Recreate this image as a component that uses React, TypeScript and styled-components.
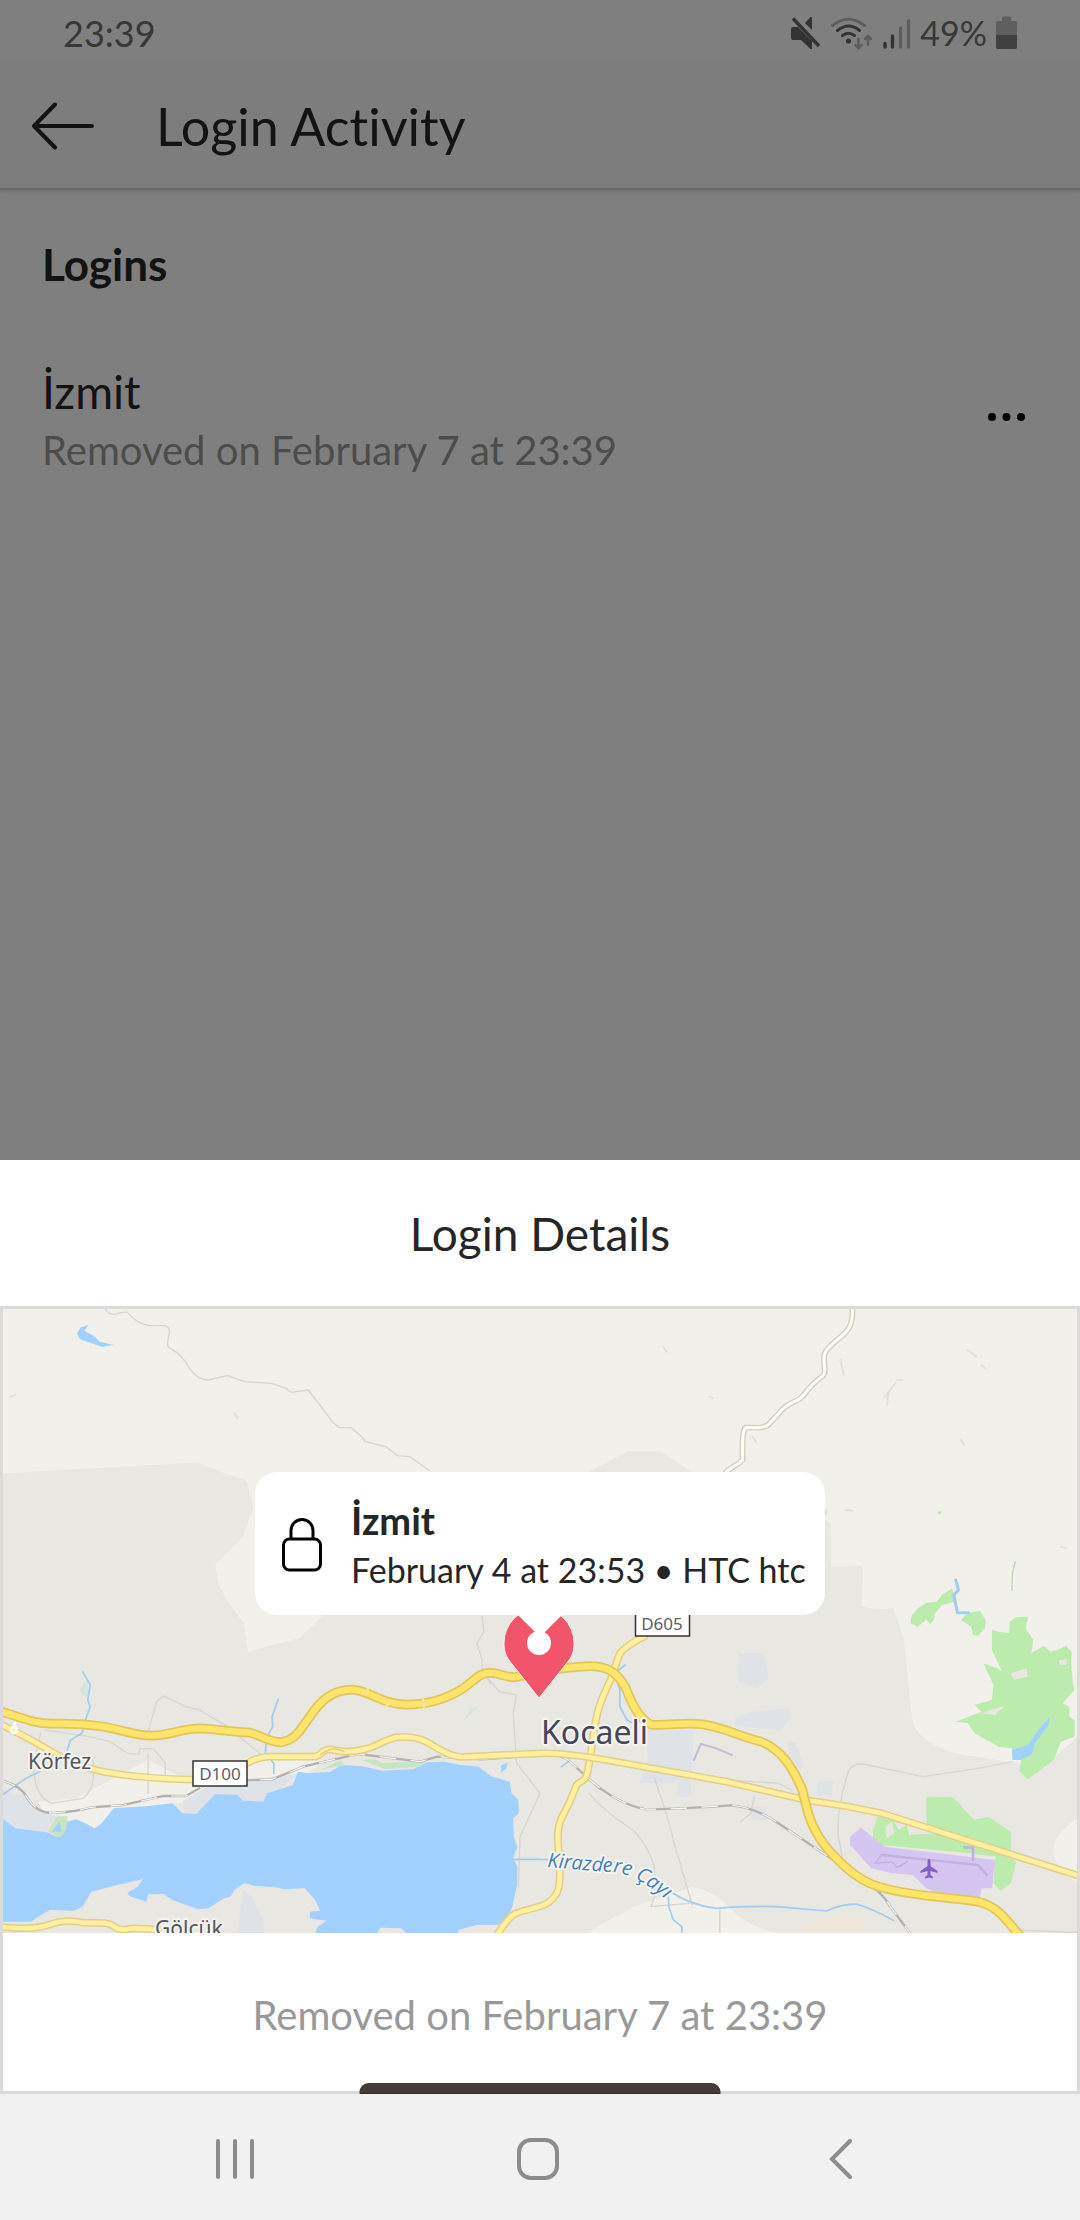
import React from "react";
import styled, { createGlobalStyle } from "styled-components";

const GlobalStyle = createGlobalStyle`
  * { box-sizing: border-box; }
  body { margin: 0; background: #fff; }
  button { border: 0; padding: 0; background: none; font: inherit; color: inherit; display: flex; align-items: center; justify-content: center; }
  svg { display: block; flex: none; }
  h1, h2, h3, p, ul { margin: 0; padding: 0; font-weight: 400; }
`;

const Screen = styled.div`
  min-height: 100vh;
  display: flex;
  flex-direction: column;
  font-family: Lato, "Open Sans", sans-serif;
  font-variant-ligatures: none;
  color: #262626;
`;

const Page = styled.div`
  position: relative;
  flex: 1;
  display: flex;
  flex-direction: column;
  background: #fff;
`;

const Scrim = styled.div`
  position: absolute;
  inset: 0;
  background: rgba(0, 0, 0, 0.5);
`;

const StatusBar = styled.div`
  height: 63px;
  padding: 2px 63px 0;
  display: flex;
  align-items: center;
  justify-content: space-between;
  font-size: 36px;
  line-height: 44px;
  color: #707070;
`;

const StatusIcons = styled.div`
  display: flex;
  align-items: center;
  gap: 9px;
  font-size: 34px;
`;

const Header = styled.header`
  height: 127px;
  padding: 0 32px;
  display: flex;
  align-items: center;
  gap: 62px;
  background: #fafafa;
  border-bottom: 2px solid #d4d4d4;
  box-shadow: 0 2px 3px rgba(0, 0, 0, 0.12);
`;

const PageTitle = styled.h1`
  font-size: 52px;
  line-height: 64px;
`;

const Section = styled.section`
  padding: 44px 42px 0;
`;

const SectionTitle = styled.h2`
  font-size: 44px;
  line-height: 60px;
  font-weight: 700;
`;

const LoginRow = styled.div`
  margin-top: 69px;
  display: flex;
  align-items: center;
  justify-content: space-between;
`;

const MoreButton = styled.button`
  && { padding: 0 12px 8px; }
`;

const Place = styled.p`
  font-size: 46px;
  line-height: 58px;
`;

const Removed = styled.p`
  font-size: 40px;
  line-height: 58px;
  color: #999;
`;

const Sheet = styled.section`
  display: flex;
  flex-direction: column;
  background: #fff;
`;

const SheetTitle = styled.h2`
  padding: 44px 0 42px;
  font-size: 46px;
  line-height: 60px;
  text-align: center;
`;

const Details = styled.div`
  position: relative;
  border: 3px solid #dbdbdb;
`;

const MapBox = styled.div`
  position: relative;
  aspect-ratio: 1074 / 624;
  & > svg { width: 100%; height: 100%; }
`;

const Callout = styled.div`
  position: absolute;
  left: 50%;
  bottom: 51%;
  transform: translateX(-50%);
  width: 570px;
  height: 143px;
  padding: 4px 16px 0 27px;
  display: flex;
  align-items: center;
  gap: 29px;
  border-radius: 22px;
  background: #fff;
  white-space: nowrap;

  &::after {
    content: "";
    position: absolute;
    top: 100%;
    left: 50%;
    margin-left: -22px;
    border: 22px solid transparent;
    border-bottom-width: 0;
    border-top-color: #fff;
  }
`;

const CalloutTitle = styled.h3`
  font-size: 38px;
  line-height: 50px;
  font-weight: 700;
`;

const CalloutText = styled.p`
  font-size: 34px;
  line-height: 50px;
`;

const Notice = styled.div`
  padding: 53px 0 47px;
  text-align: center;
`;

const Toast = styled.div`
  position: absolute;
  left: 50%;
  bottom: -3px;
  transform: translateX(-50%);
  width: 361px;
  height: 11px;
  border-radius: 9px 9px 0 0;
  background: #433c39;
  border-bottom: 1px solid #332d2b;
`;

const NavBar = styled.nav`
  height: 126px;
  padding: 3px 88px 0 84px;
  display: grid;
  grid-template-columns: repeat(3, 1fr);
  background: #f1f1f1;
`;

const MuteIcon = () => (
  <svg width="30" height="34" viewBox="0 0 30 34" fill="#666">
    <path d="M2 11h5l14 14v8h-1.500L10 24H2Q0 24 0 22V13Q0 11 2 11zM14 7l5.500-6H21v13z" />
    <path d="M2 2.500L28 30" stroke="#666" strokeWidth="3.400" />
  </svg>
);

const WifiIcon = () => (
  <svg width="44" height="34" viewBox="0 0 44 34" fill="none" strokeWidth="3" strokeLinecap="round">
    <path d="M2.500 9.500Q18.500-3 34.500 9.500" stroke="#bbb" />
    <path d="M7.500 14.500Q18.500 5.500 29.500 14.500M12.500 19.500Q18.500 15 24.500 19.500" stroke="#666" />
    <circle cx="18.500" cy="25" r="2.600" fill="#666" />
    <path d="M28.500 23v8M25.500 29l3 3 3-3M38 29v-8M35 23l3-3 3 3" stroke="#bbb" strokeWidth="2.600" />
  </svg>
);

const SignalIcon = () => (
  <svg width="28" height="34" viewBox="0 0 28 34" strokeWidth="3.400" strokeLinecap="round">
    <path d="M2 27.500v3.500M9.500 20v11" stroke="#666" />
    <path d="M17.500 12v19M25.500 5v26" stroke="#bbb" />
  </svg>
);

const BatteryIcon = () => (
  <svg width="21" height="34" viewBox="0 0 21 34">
    <path d="M6 5V2q0-1.500 1.500-1.500h6Q15 .5 15 2v3h4q2 0 2 2v12H0V7q0-2 2-2z" fill="#bfbfbf" />
    <path d="M0 19h21v12q0 2-2 2H2q-2 0-2-2z" fill="#808080" />
  </svg>
);

const ArrowIcon = () => (
  <svg width="62" height="48" viewBox="0 0 62 48" fill="none" stroke="#262626" strokeWidth="4" strokeLinecap="round" strokeLinejoin="round">
    <path d="M60 24H2M23 2.500L2 24l21 21.500" />
  </svg>
);

const DotsIcon = () => (
  <svg width="38" height="40" viewBox="0 0 38 40" fill="#000">
    <circle cx="4" cy="20" r="4" />
    <circle cx="18.500" cy="20" r="4" />
    <circle cx="33" cy="20" r="4" />
  </svg>
);

const LockIcon = () => (
  <svg width="40" height="54" viewBox="0 0 40 54" fill="none" stroke="#000" strokeWidth="3">
    <rect x="1.500" y="21" width="37" height="31" rx="6" />
    <path d="M9 21V12.500a11 11 0 0 1 22 0V21" />
  </svg>
);

const motorway =
  "M0 334C60 350 90 370 150 371C200 370 250 372 300 380C360 390 390 407 440 407C500 405 530 385 580 385C640 388 680 397 720 397C760 405 775 425 815 427C860 420 870 390 900 350C930 300 970 268 1025 269C1080 275 1110 313 1180 314C1250 314 1300 295 1345 265C1380 240 1390 220 1420 218C1460 220 1470 235 1500 231C1560 215 1620 203 1700 199C1760 195 1790 215 1815 260C1835 310 1850 350 1890 374C1950 378 1980 365 2040 373C2110 385 2150 410 2210 425C2270 450 2300 500 2330 570C2345 640 2355 690 2410 755C2450 800 2500 850 2570 865C2660 890 2750 890 2840 905C2900 920 2920 960 2960 1005";
const road =
  "M0 372Q70 408 125 440Q220 500 300 515Q400 535 560 539L700 500Q740 472 780 470H915C940 465 930 447 960 449L1000 455C1080 455 1100 425 1150 412C1210 405 1240 425 1270 445Q1310 470 1340 471Q1450 465 1570 460C1640 458 1700 470 1760 480L2110 545L2340 600Q2450 615 2560 640Q2820 725 3140 830";
const localRoad =
  "M1870 110Q1820 135 1800 160Q1785 200 1775 235C1740 310 1735 330 1725 390Q1712 490 1705 520C1700 550 1680 540 1672 560Q1655 610 1630 655C1615 690 1620 730 1625 790C1628 860 1625 890 1580 915C1520 935 1490 935 1475 960Q1455 985 1435 1015";
const southRoad = "M0 980C60 988 110 985 140 975C180 960 210 960 240 968C290 970 310 965 330 978Q345 995 385 985Q430 985 460 990";
const northRoad =
  "M2475-880C2477-830 2470-810 2430-780C2395-745 2388-750 2395-690C2395-665 2375-670 2345-630C2320-590 2300-600 2275-575L2230-525C2205-510 2190-520 2165-517C2155-505 2156-480 2156-420C2140-400 2125-405 2100-375";
const railway =
  "M0 540Q60 555 80 595Q110 645 165 638Q220 635 265 622L360 615L475 588H540Q580 565 610 545L790 538L880 500L1040 462L1220 485L1270 470L1400 478L1570 465Q1620 460 1650 480L1710 537Q1790 610 1870 627Q1930 630 2120 616Q2190 620 2260 670L2470 815Q2560 870 2585 920L2650 1010";

const MapDrawing = () => (
  <svg viewBox="3 1309 1074 624" preserveAspectRatio="none" role="img" aria-label="Kocaeli">
    <defs>
      <path id="river-label" d="M547 1867L606 1872Q636 1870 676 1909" />
    </defs>
    <rect x="3" y="1309" width="1074" height="624" fill="#f1f0ea" />
    <g transform="translate(0 1600) scale(0.3444 0.3333)" fill="none" strokeLinecap="round" strokeLinejoin="round">
      <path
        fill="#e8e7e2"
        d="M0-379L450-406L575-412L640-385L717-357L735-275L705-190L625-105L635-45L665 10L708 70L720 155L868 115L940 45L1100-150L1500-250L1715-387L1823-447H1913L2008-387L2200-300L2396-240L2411-230L2413-100L2505-102L2503 20Q2550 30 2593 25L2623 110L2648 350Q2655 400 2700 425Q2740 455 2800 465L2960 490L2990 535L3140 400V650Q3060 690 3058 760Q3075 830 3140 850V1000H2260Q2170 980 2120 925Q2080 875 2010 860Q1940 885 1840 920L1700 1000H0z"
      />
      <path fill="#f1f0ea" d="M110 605L220 595L430 480L560 550L720 470L950 480L860 540L640 580L540 605L340 630L275 690L200 660L130 640z" />
      <path
        fill="#dfe2e6"
        d="M0 570L75 590L125 640L185 650L190 700L160 712L50 690L0 660zM530 605L600 560L690 545L830 525L870 520L770 605H700L630 590L570 642H535zM690 1000L705 870L730 890L765 960V1000zM2145 160H2218L2230 220L2228 240L2200 265L2143 245zM2135 350L2190 335L2290 325L2295 350L2270 390L2200 385L2135 375zM1880 390H2015L2005 590H1968V540L1940 550H1855L1880 480zM2285 425L2310 430L2335 500L2325 510L2300 480zM2375 545L2420 543L2415 590L2370 585zM2185 620H2225V660H2180z"
      />
      <path fill="#efe5d6" opacity=".7" d="M2400 955L2500 945L2510 998H2320L2330 970z" />
      <path
        fill="#a3d1ff"
        d="M0 650L45 685L135 697L165 710L185 700L195 665L220 658L245 668L275 685L295 670L330 625L430 618L500 610L530 640L570 642L625 582L690 585L705 602L765 605L775 580L850 555L865 515L895 520L960 515L990 495L1050 498L1110 512L1200 507L1240 487L1290 485L1340 495L1390 500L1425 528L1480 545L1485 580L1505 600L1507 640L1490 655L1492 710L1502 740L1490 775L1502 800V850L1488 920L1470 960L1445 975L1385 975L1330 990V1000H1180L1165 985L1105 983L1095 1000H915L922 980L948 962L900 955V935L930 932L915 900L885 865L825 868L800 862L740 858L710 850L680 870L670 890L650 895L605 925L575 928L500 900L475 882L430 883L425 905L375 888L370 878L400 860L415 838L340 855L265 875L240 920L215 932L145 930L120 945L90 965L0 965z"
      />
      <path fill="#c7e5c3" d="M165 650L195 648L192 690L175 712L140 695zM1050 480L1090 478L1110 490L1190 485L1240 480L1220 500L1120 508zM930 510L990 480L1000 495z" />
      <path fill="#d5e5dc" d="M230 270L255 240V290L240 285zM1345 365L1365 325L1390 318L1360 350z" />
      <path fill="#a3d1ff" d="M257-825L235-818L223-800L232-782L262-772L295-760L330-765L290-775L272-793L245-808zM150 695L172 665L180 695zM1455 495L1475 488L1470 505L1455 518z" />

      <g fill="#bcebae">
        <path d="M2643 70L2648 45L2665 25L2690 8L2720 5L2735-15L2765-35L2775 5L2735 15L2715 40L2712 60L2700 72L2690 58L2665 80zM2810 40L2845 32L2862 60L2860 85L2840 107L2825 105L2820 80L2790 60z" />
        <path d="M2880 90L2900 95L2930 100L2932 65L2950 52L2985 50L2978 85L3000 120L2995 160L3030 137L3050 155L3070 150L3095 137L3112 155L3110 180L3115 250L3120 270L3085 310L3105 320L3105 350L3120 360V410L3080 425L3060 480L2985 538L2960 515L2965 480L2935 445L2900 440L2830 400L2810 370L2775 365L2850 335L2830 315L2880 300L2885 255L2855 190L2895 205L2910 215L2880 150z" />
        <path d="M2690 590L2765 592L2785 608L2800 630L2830 660L2870 650L2935 695V760L2950 790L2935 850L2905 872L2885 850L2890 770L2820 760L2560 735L2535 720V690L2548 650L2590 655L2610 690L2640 670L2690 680z" />
        <path d="M2395-270h5v15h-5zM2720-265l15-2-5 12z" />
      </g>
      <path fill="#e8e7e2" d="M2570 680L2590 665L2597 700L2575 715zM2935 220L2980 205L2985 230L2945 240zM3073 180L3100 178L3095 195L3078 195zM2630 660L2670 675L2720 700L2640 705zM2850 340L2915 318L2890 345z" />
      <path fill="#a3d1ff" d="M2938 450L2985 435L3015 390L3048 350L3045 375L3005 430L2995 465L2965 480H2940z" />
      <path stroke="#a3cdf5" strokeWidth="9" d="M2775-60L2783-30L2770-15L2780 38H2812" />
      <path stroke="#b5dfa8" strokeWidth="4" d="M2948-115L2940-80L2938-30" />
      <path fill="#d5c6f1" d="M2468 710L2500 683L2570 740L2890 780L2880 865H2850L2845 893L2730 885L2690 865L2650 825L2590 820L2530 805L2468 735z" />
      <path stroke="#c2b1e0" strokeWidth="8" d="M2560 765L2840 795L2865 825M2800 742H2825V780" />
      <path stroke="#c2b1e0" strokeWidth="4" d="M2560 765L2540 790L2590 785L2605 803L2635 785" />
      <path stroke="#c5bfd5" strokeWidth="6" d="M2015 480L2035 432L2080 445L2125 465" />

      <g stroke="#d7d6cf" strokeWidth="4">
        <path d="M305-873C325-840 350-870 370-863C400-830 410-830 430-824L480-823C510-810 470-765 495-755Q530-735 550-695Q575-660 605-660L660-673L710-655L790-650L830-635L845-623L895-630L925-590L965-535L985-517H1020L1050-490L1060-475L1120-460L1155-433L1190-430L1245-390" />
        <path d="M430 395L455 305L475 288L540 320L580 330L660 380L760 465M130 390L260 410L320 425L370 460L405 463V447L445 445L480 490V540M118 400L97 500Q100 590 150 610L240 595Q280 570 270 480M430 460V580M1400 50L1405 95L1385 130L1400 180V215L1450 275L1500 285L1490 340L1500 490L1568 580L1510 710L1505 860M1400 215L1425 250" />
        <path d="M1710 580Q1750 630 1830 685Q1875 720 1900 800V890L1890 920L2000 910M1900 535Q1940 650 1960 740L2010 915M2940 485L2840 505L2680 530L2520 495Q2480 485 2465 510Q2430 620 2433 700L2445 770M2110 540L2260 550L2300 570M2190 590L2180 640L2150 665M2090 930V1000M2950 990L3140 998" />
      </g>
      <path
        stroke="#e3e1da"
        strokeWidth="6"
        d="M1925-760L1935-745M2440-720L2450-675M2570-610L2600-650M2580-620L2575-585M2605-660L2620-660M2810-750L2835-730M2850-705L2860-695M2790-480L2800-465M2060-610L2070-605M680-560L690-545M30-610L45-615M2185-490L2195-475M2455-270L2475-268M3080-160L3095-155"
      />

      <g stroke="#a3cdf0" strokeWidth="5">
        <path d="M240 215L262 255L255 300L262 320L248 360L238 400L205 420L195 450M115 515L75 535L0 590M808 297L790 350L792 380L775 410L770 460L795 490V520M1815 195L1785 220L1800 270L1800 320L1820 360L1850 375M1570 778H1490M1650 485L1630 500M1568 778Q1680 780 1830 790" />
        <path d="M1940 870Q2000 915 2080 925Q2200 915 2280 922L2400 933Q2450 910 2490 913Q2540 930 2595 962M1940 870L1942 920L1955 960L1980 980V1000M1710 535L1745 570" />
      </g>

      <path d={railway} stroke="#b3b2b0" strokeWidth="7" />
      <path d={railway} stroke="#fafafa" strokeWidth="3.500" strokeDasharray="45 45" />

      <path d={northRoad} stroke="#d2d0bf" strokeWidth="17" />
      <path d={northRoad} stroke="#fdfdf8" strokeWidth="9" />
      {[southRoad, localRoad, road].map((d) => (
        <g key={d}>
          <path d={d} stroke="#e2cf85" strokeWidth="23" />
          <path d={d} stroke="#fff0a0" strokeWidth="14" />
        </g>
      ))}
      <path d="M930 465Q965 435 1000 455" stroke="#e2cf85" strokeWidth="4" />
      <path d={motorway} stroke="#e3c55a" strokeWidth="29" />
      <path d={motorway} stroke="#ffe66b" strokeWidth="19" />
      <path d="M1060 280l10-16M1120 320l10-12M1228 293l4 32" stroke="#f4e6a0" strokeWidth="7" />
      <circle cx="40" cy="390" r="9" stroke="#fff" strokeWidth="7" />
      <path d="M43 382V370" stroke="#fff" strokeWidth="8" />
    </g>

    <g fill="#fff" stroke="#333" strokeWidth="1.500">
      <rect x="193" y="1761" width="54" height="25" />
      <rect x="635.500" y="1611" width="54" height="25" />
    </g>
    <g fontFamily="'Noto Sans', sans-serif" fill="#5f6066">
      <g fontSize="17" textAnchor="middle">
        <text x="220" y="1780">D100</text>
        <text x="662" y="1630">D605</text>
      </g>
      <g stroke="#f4f4f0" strokeWidth="4" strokeLinejoin="round" paintOrder="stroke" fill="#55565c">
        <text x="28" y="1769" fontSize="21">Körfez</text>
        <text x="155" y="1936" fontSize="21">Gölcük</text>
        <text x="541" y="1744" fontSize="32" fill="#45465a">Kocaeli</text>
        <text fontSize="20" fontStyle="italic" fontFamily="'Open Sans', sans-serif" fill="#4580bd">
          <textPath href="#river-label">Kirazdere Çayı</textPath>
        </text>
      </g>
    </g>
    <path
      fill="#8660c0"
      d="M929 1859q1.500 0 1.500 3v4l7 5v2l-7-2v4l2.500 2v1.500l-4-1-4 1v-1.500l2.500-2v-4l-7 2v-2l7-5v-4q0-3 1.500-3z"
    />
    <path fill="#f2556b" stroke="#f6eeee" strokeWidth="1" d="M539 1698L512 1664C505 1656 504 1650 504 1643A35 35 0 0 1 574 1643C574 1650 573 1656 566 1664z" />
    <circle cx="539" cy="1643" r="12" fill="#fff" />
  </svg>
);

const removedText = "Removed on February 7 at 23:39";

export default function App() {
  return (
    <Screen>
      <GlobalStyle />
      <Page>
        <StatusBar>
          <span>23:39</span>
          <StatusIcons>
            <MuteIcon />
            <WifiIcon />
            <SignalIcon />
            <span>49%</span>
            <BatteryIcon />
          </StatusIcons>
        </StatusBar>
        <Header>
          <button type="button" aria-label="Back"><ArrowIcon /></button>
          <PageTitle>Login Activity</PageTitle>
        </Header>
        <Section>
          <SectionTitle>Logins</SectionTitle>
          <LoginRow>
            <div>
              <Place>İzmit</Place>
              <Removed>{removedText}</Removed>
            </div>
            <MoreButton type="button" aria-label="More options"><DotsIcon /></MoreButton>
          </LoginRow>
        </Section>
        <Scrim />
      </Page>
      <Sheet>
        <SheetTitle>Login Details</SheetTitle>
        <Details>
          <MapBox>
            <MapDrawing />
            <Callout>
              <LockIcon />
              <div>
                <CalloutTitle>İzmit</CalloutTitle>
                <CalloutText>February 4 at 23:53 • HTC htc</CalloutText>
              </div>
            </Callout>
          </MapBox>
          <Notice><Removed>{removedText}</Removed></Notice>
          <Toast />
        </Details>
      </Sheet>
      <NavBar>
        <button type="button" aria-label="Recent apps">
          <svg width="40" height="42" viewBox="0 0 40 42" stroke="#8c8c8c" strokeWidth="4" strokeLinecap="round">
            <path d="M3 3v36M20 3v36M37 3v36" />
          </svg>
        </button>
        <button type="button" aria-label="Home">
          <svg width="42" height="42" viewBox="0 0 42 42" fill="none" stroke="#8c8c8c" strokeWidth="4">
            <rect x="2" y="2" width="38" height="38" rx="12" />
          </svg>
        </button>
        <button type="button" aria-label="Go back">
          <svg width="24" height="42" viewBox="0 0 24 42" fill="none" stroke="#8c8c8c" strokeWidth="4" strokeLinecap="round">
            <path d="M21 3L3 21l18 18" />
          </svg>
        </button>
      </NavBar>
    </Screen>
  );
}
